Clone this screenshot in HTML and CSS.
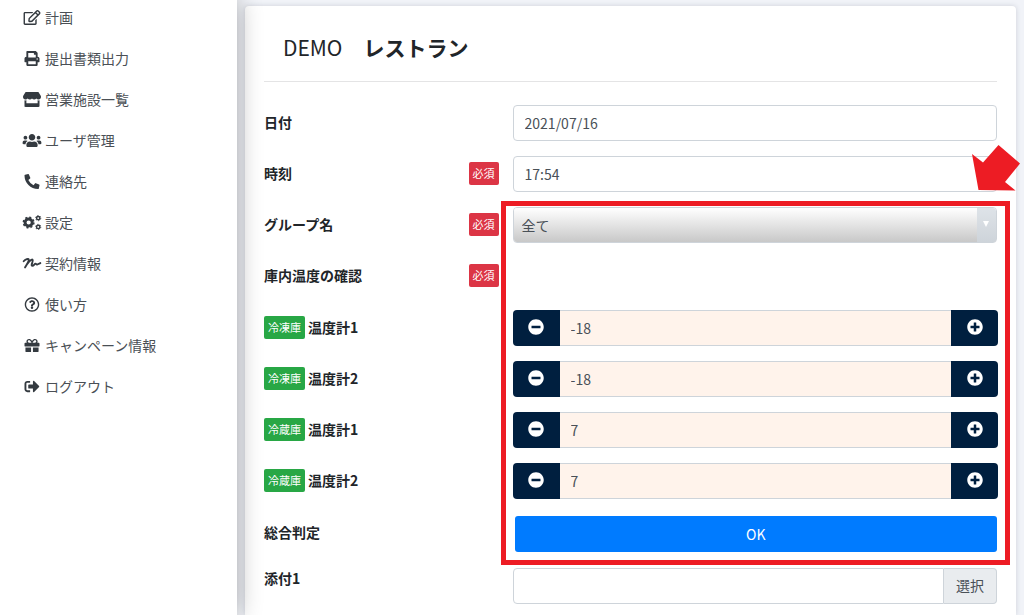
FILE: index.html
```html
<!DOCTYPE html>
<html lang="ja">
<head>
    <meta charset="UTF-8">
    <meta name="viewport" content="width=device-width, initial-scale=1.0">
    <title>DEMO レストラン</title>
    <link rel="stylesheet" href="styles.css">
</head>
<body>
    <svg class="defs" width="0" height="0" aria-hidden="true">
        <symbol id="minus" viewBox="0 0 512 512"><path d="M256 8C119 8 8 119 8 256s111 248 248 248 248-111 248-248S393 8 256 8zM124 296c-6.600 0-12-5.400-12-12v-56c0-6.600 5.400-12 12-12h264c6.600 0 12 5.400 12 12v56c0 6.600-5.400 12-12 12H124z"/></symbol>
        <symbol id="plus" viewBox="0 0 512 512"><path d="M256 8C119 8 8 119 8 256s111 248 248 248 248-111 248-248S393 8 256 8zm144 276c0 6.600-5.400 12-12 12h-92v92c0 6.600-5.400 12-12 12h-56c-6.600 0-12-5.400-12-12v-92h-92c-6.600 0-12-5.400-12-12v-56c0-6.600 5.400-12 12-12h92v-92c0-6.600 5.400-12 12-12h56c6.600 0 12 5.400 12 12v92h92c6.600 0 12 5.400 12 12v56z"/></symbol>
    </svg>
    <div class="layout">
        <nav class="sidebar">
            <a href="#"><svg viewBox="0 0 576 512"><path d="M402.300 344.900l32-32c5-5 13.700-1.500 13.700 5.700V464c0 26.500-21.500 48-48 48H48c-26.500 0-48-21.500-48-48V112c0-26.500 21.500-48 48-48h273.500c7.100 0 10.700 8.600 5.700 13.700l-32 32c-1.500 1.500-3.500 2.300-5.700 2.300H48v352h352V350.500c0-2.100.8-4.100 2.300-5.600zm156.600-201.800L296.300 405.700l-90.400 10c-26.200 2.900-48.500-19.200-45.600-45.600l10-90.400L432.900 17.100c22.900-22.900 59.900-22.900 82.700 0l43.200 43.200c22.900 22.900 22.900 60 .1 82.800zM460.100 174L402 115.900 216.200 301.800l-7.300 65.300 65.300-7.300L460.100 174zm64.800-79.700l-43.200-43.200c-4.100-4.100-10.800-4.100-14.800 0L436 82l58.100 58.100 30.900-30.900c4-4.200 4-10.800-.1-14.900z"/></svg>計画</a>
            <a href="#"><svg viewBox="0 0 512 512"><path d="M448 192V77.250c0-8.490-3.370-16.620-9.370-22.630L393.370 9.370c-6-6-14.140-9.370-22.630-9.370H96C78.330 0 64 14.330 64 32v160c-35.350 0-64 28.650-64 64v112c0 8.840 7.160 16 16 16h48v96c0 17.670 14.330 32 32 32h320c17.670 0 32-14.330 32-32v-96h48c8.840 0 16-7.160 16-16V256c0-35.350-28.650-64-64-64zm-64 256H128v-96h256v96zm0-224H128V64h192v48c0 8.840 7.160 16 16 16h48v96zm48 72c-13.250 0-24-10.750-24-24 0-13.260 10.750-24 24-24s24 10.740 24 24c0 13.250-10.750 24-24 24z"/></svg>提出書類出力</a>
            <a href="#"><svg viewBox="0 0 616 512"><path d="M602 118.600L537.100 15C531.300 5.700 521 0 510 0H106C95 0 84.700 5.700 78.900 15L14 118.600c-33.500 53.500-3.800 127.900 58.800 136.400 4.500.6 9.100.9 13.700.9 29.600 0 55.800-13 73.800-33.100 18 20.100 44.300 33.100 73.800 33.100 29.600 0 55.800-13 73.800-33.100 18 20.100 44.300 33.100 73.800 33.100 29.600 0 55.800-13 73.800-33.100 18.100 20.100 44.300 33.100 73.800 33.100 4.700 0 9.200-.3 13.700-.9 62.800-8.400 92.600-82.800 59-136.400zM529.500 288c-10 0-19.900-1.500-29.500-3.800V384H116v-99.800c-9.600 2.200-19.500 3.800-29.500 3.800-6 0-12.100-.4-18-1.200-5.600-.8-11.100-2.100-16.400-3.600V480c0 17.700 14.300 32 32 32h448c17.700 0 32-14.300 32-32V283.200c-5.400 1.600-10.800 2.900-16.400 3.600-6.100.8-12.100 1.200-18.200 1.200z"/></svg>営業施設一覧</a>
            <a href="#"><svg viewBox="0 0 640 512"><path d="M96 224c35.300 0 64-28.700 64-64s-28.700-64-64-64-64 28.700-64 64 28.700 64 64 64zm448 0c35.300 0 64-28.700 64-64s-28.700-64-64-64-64 28.700-64 64 28.700 64 64 64zm32 32h-64c-17.600 0-33.500 7.100-45.100 18.600 40.300 22.100 68.900 62 75.100 109.400h66c17.700 0 32-14.300 32-32v-32c0-35.300-28.700-64-64-64zm-256 0c61.900 0 112-50.100 112-112S381.900 32 320 32 208 82.100 208 144s50.100 112 112 112zm76.800 32h-8.300c-20.800 10-43.900 16-68.500 16s-47.600-6-68.500-16h-8.300C179.600 288 128 339.600 128 403.200V432c0 26.500 21.500 48 48 48h288c26.500 0 48-21.500 48-48v-28.800c0-63.600-51.600-115.200-115.200-115.200zm-223.700-13.400C161.500 263.100 145.600 256 128 256H64c-35.300 0-64 28.700-64 64v32c0 17.700 14.300 32 32 32h65.900c6.300-47.400 34.900-87.300 75.200-109.400z"/></svg>ユーザ管理</a>
            <a href="#"><svg viewBox="0 0 512 512"><path d="M497.390 361.800l-112-48a24 24 0 0 0-28 6.900l-49.600 60.600A370.660 370.660 0 0 1 130.600 204.110l60.600-49.600a23.940 23.940 0 0 0 6.900-28l-48-112A24.160 24.160 0 0 0 122.600.61l-104 24A24 24 0 0 0 0 48c0 256.500 207.900 464 464 464a24 24 0 0 0 23.400-18.600l24-104a24.290 24.290 0 0 0-14.010-27.600z"/></svg>連絡先</a>
            <a href="#"><svg viewBox="0 0 640 512" class="line"><circle cx="205" cy="256" r="122" stroke-width="100"/><circle cx="205" cy="256" r="180" stroke-width="50" pathLength="16" stroke-dasharray="1 1"/><circle cx="532" cy="106" r="58" stroke-width="50"/><circle cx="532" cy="106" r="88" stroke-width="30" pathLength="12" stroke-dasharray="1 1"/><circle cx="532" cy="406" r="58" stroke-width="50"/><circle cx="532" cy="406" r="88" stroke-width="30" pathLength="12" stroke-dasharray="1 1"/></svg>設定</a>
            <a href="#"><svg viewBox="0 0 640 512" class="line"><path stroke-width="64" stroke-linecap="round" stroke-linejoin="round" d="M35 180C90 110 205 75 210 125C212 190 120 320 82 390C160 260 290 90 340 125C380 165 260 330 330 335C390 335 400 260 440 260C475 260 455 300 500 290L605 240"/></svg>契約情報</a>
            <a href="#"><svg viewBox="0 0 512 512"><path d="M256 8C119.043 8 8 119.083 8 256c0 136.997 111.043 248 248 248s248-111.003 248-248C504 119.083 392.957 8 256 8zm0 448c-110.532 0-200-89.431-200-200 0-110.495 89.472-200 200-200 110.491 0 200 89.471 200 200 0 110.530-89.431 200-200 200zm107.244-255.200c0 67.052-72.421 68.084-72.421 92.863V300c0 6.627-5.373 12-12 12h-45.647c-6.627 0-12-5.373-12-12v-8.659c0-35.745 27.100-50.034 47.579-61.516 17.561-9.845 28.324-16.541 28.324-29.579 0-17.246-21.999-28.693-39.784-28.693-23.189 0-33.894 10.977-48.942 29.969-4.057 5.120-11.460 6.071-16.666 2.124l-27.824-21.098c-5.107-3.872-6.251-11.066-2.644-16.363C184.846 131.491 214.940 112 261.794 112c49.071 0 101.450 38.304 101.450 88.800zM298 368c0 23.159-18.841 42-42 42s-42-18.841-42-42 18.841-42 42-42 42 18.841 42 42z"/></svg>使い方</a>
            <a href="#"><svg viewBox="0 0 512 512"><path d="M32 448c0 17.700 14.300 32 32 32h160V320H32v128zm256 32h160c17.700 0 32-14.300 32-32V320H288v160zm192-320h-42.100c6.200-12.100 10.100-25.500 10.100-40 0-48.500-39.500-88-88-88-41.600 0-68.500 21.300-103 68.300-34.500-47-61.400-68.300-103-68.300-48.500 0-88 39.500-88 88 0 14.500 3.800 27.900 10.100 40H32c-17.700 0-32 14.300-32 32v80c0 8.800 7.200 16 16 16h480c8.800 0 16-7.200 16-16v-80c0-17.700-14.300-32-32-32zm-326.100 0c-22.100 0-40-17.900-40-40s17.900-40 40-40c19.900 0 34.600 3.300 86.100 80h-86.100zm206.100 0h-86.100c51.400-76.500 65.700-80 86.100-80 22.100 0 40 17.900 40 40s-17.900 40-40 40z"/></svg>キャンペーン情報</a>
            <a href="#"><svg viewBox="0 0 512 512"><path d="M497 273L329 441c-15 15-41 4.500-41-17v-96H152c-13.300 0-24-10.700-24-24v-96c0-13.300 10.700-24 24-24h136V88c0-21.400 25.900-32 41-17l168 168c9.300 9.400 9.300 24.600 0 34zM192 436v-40c0-6.600-5.400-12-12-12H96c-17.700 0-32-14.300-32-32V160c0-17.700 14.300-32 32-32h84c6.600 0 12-5.400 12-12V76c0-6.600-5.400-12-12-12H96c-53 0-96 43-96 96v192c0 53 43 96 96 96h84c6.600 0 12-5.400 12-12z"/></svg>ログアウト</a>
        </nav>
        <main class="content">
            <form class="card">
                <h1>DEMO　<strong>レストラン</strong></h1>
                <div class="row">
                    <label for="date">日付</label>
                    <input type="text" class="field" id="date" value="2021/07/16">
                </div>
                <div class="row">
                    <label for="time">時刻 <span class="badge required">必須</span></label>
                    <input type="text" class="field" id="time" value="17:54">
                </div>
                <div class="marked">
                    <div class="row">
                        <label for="group">グループ名 <span class="badge required">必須</span></label>
                        <div class="select">
                            <select id="group"><option>全て</option></select>
                        </div>
                    </div>
                    <div class="row heading">
                        <div class="label">庫内温度の確認 <span class="badge required">必須</span></div>
                    </div>
                    <div class="row">
                        <label for="temp1"><span class="badge type">冷凍庫</span>温度計1</label>
                        <div class="stepper">
                            <button type="button" aria-label="下げる"><svg><use href="#minus"/></svg></button>
                            <input type="text" id="temp1" value="-18">
                            <button type="button" aria-label="上げる"><svg><use href="#plus"/></svg></button>
                        </div>
                    </div>
                    <div class="row">
                        <label for="temp2"><span class="badge type">冷凍庫</span>温度計2</label>
                        <div class="stepper">
                            <button type="button" aria-label="下げる"><svg><use href="#minus"/></svg></button>
                            <input type="text" id="temp2" value="-18">
                            <button type="button" aria-label="上げる"><svg><use href="#plus"/></svg></button>
                        </div>
                    </div>
                    <div class="row">
                        <label for="temp3"><span class="badge type">冷蔵庫</span>温度計1</label>
                        <div class="stepper">
                            <button type="button" aria-label="下げる"><svg><use href="#minus"/></svg></button>
                            <input type="text" id="temp3" value="7">
                            <button type="button" aria-label="上げる"><svg><use href="#plus"/></svg></button>
                        </div>
                    </div>
                    <div class="row">
                        <label for="temp4"><span class="badge type">冷蔵庫</span>温度計2</label>
                        <div class="stepper">
                            <button type="button" aria-label="下げる"><svg><use href="#minus"/></svg></button>
                            <input type="text" id="temp4" value="7">
                            <button type="button" aria-label="上げる"><svg><use href="#plus"/></svg></button>
                        </div>
                    </div>
                    <div class="row">
                        <label for="result">総合判定</label>
                        <button type="button" class="ok" id="result">OK</button>
                    </div>
                    <div class="frame"></div>
                    <svg class="arrow" viewBox="0 0 48 46"><path d="M26.500 0L48 18.500 33 37l10.500 8.500L6.500 45 0 9l11 8.500z"/></svg>
                </div>
                <div class="row attach">
                    <label for="file1">添付1</label>
                    <div class="file">
                        <input type="text" id="file1">
                        <button type="button">選択</button>
                    </div>
                </div>
            </form>
        </main>
    </div>
</body>
</html>
```
FILE: styles.css
```css
* {
    box-sizing: border-box;
}
body {
    margin: 0;
    background-color: #f1f3f8;
    color: #212529;
    font-family: "Noto Sans CJK JP", sans-serif;
    font-size: 14px;
    line-height: 21px;
}
input, select, button {
    margin: 0;
    color: #495057;
    font-family: inherit;
    font-size: 14px;
}
.defs {
    display: block;
}
.layout {
    display: flex;
    min-height: 100vh;
}

/* sidebar */
.sidebar {
    position: relative;
    z-index: 1;
    flex: 0 0 237px;
    padding-left: 22px;
    background-color: #fff;
    box-shadow: 0 0 24px rgba(0, 0, 0, 0.33);
    clip-path: inset(0 -40px 0 0);
}
.sidebar a {
    display: flex;
    align-items: center;
    gap: 3px;
    height: 34px;
    margin-bottom: 7px;
    color: #4a4f55;
    text-decoration: none;
}
.sidebar svg {
    width: 20px;
    height: 15px;
    fill: #343a40;
}
.sidebar .line {
    fill: none;
    stroke: #343a40;
}

/* form */
.content {
    display: flex;
    flex: 1;
    min-width: 0;
    padding: 6px 8px 0;
}
.card {
    flex: 1;
    min-width: 0;
    padding: 21px 19px 0;
    background-color: #fff;
    border-radius: 4px 4px 0 0;
    box-shadow: 0 0 5px rgba(60, 70, 90, 0.2);
}
h1 {
    margin: 0 0 23px;
    padding: 0 19px 13px;
    border-bottom: 1px solid #e4e4e5;
    font-size: 21px;
    font-weight: normal;
    line-height: 41px;
}
.row {
    display: grid;
    grid-template-columns: 32% 1fr;
    column-gap: 14px;
    align-items: center;
    min-height: 36px;
    margin-bottom: 15px;
}
.row label, .label {
    display: flex;
    align-items: center;
    padding-bottom: 2px;
    font-weight: bold;
}
.heading {
    min-height: 37px;
}
.badge {
    padding: 0 4px;
    border-radius: 2px;
    color: #fff;
    font-size: 11px;
    font-weight: normal;
    line-height: 23px;
}
.required {
    margin-left: auto;
    background-color: #dc3545;
}
.type {
    margin-right: 3px;
    background-color: #28a745;
}
.field {
    width: 100%;
    height: 36px;
    padding: 0 11px;
    border: 1px solid #ced4da;
    border-radius: 4px;
}
.select {
    position: relative;
    overflow: hidden;
    height: 36px;
    border: 1px solid #ced4da;
    border-radius: 4px;
}
.select select {
    appearance: none;
    width: 100%;
    height: 34px;
    padding: 0 8px;
    border: none;
    background: linear-gradient(#fff, #c8c8c8);
}
.select::before {
    content: "";
    position: absolute;
    top: 0;
    right: 0;
    bottom: 0;
    width: 19px;
    background: linear-gradient(#dee3e8, #ced4da);
    pointer-events: none;
}
.select::after {
    content: "";
    position: absolute;
    top: 13px;
    right: 7px;
    border: 3px solid transparent;
    border-top: 6px solid #fff;
    pointer-events: none;
}
.stepper, .file {
    display: flex;
    height: 36px;
}
.stepper {
    margin-right: -1px;
}
.stepper input, .file input {
    flex: 1;
    min-width: 0;
    padding: 0 11px;
    border: 1px solid #ced4da;
}
.stepper input {
    border-width: 1px 0;
    background-color: #fff3eb;
}
.stepper button {
    display: flex;
    align-items: center;
    justify-content: center;
    width: 47px;
    padding: 0 0 2px;
    border: none;
    border-radius: 4px 0 0 4px;
    background-color: #001f3f;
}
.stepper button:last-child {
    border-radius: 0 4px 4px 0;
}
.stepper svg {
    width: 16px;
    height: 16px;
    fill: #fff;
}
.ok {
    height: 36px;
    margin: 2px 0 1px 2px;
    border: none;
    border-radius: 3px;
    background-color: #007bff;
    color: #fff;
}
.attach {
    align-items: start;
    margin-bottom: 0;
}
.file input {
    border-radius: 4px 0 0 4px;
}
.file button {
    width: 53px;
    padding: 0 0 2px;
    border: 1px solid #ced4da;
    border-left: none;
    border-radius: 0 4px 4px 0;
    background-color: #e9ecef;
}

/* marker drawn over the form */
.marked {
    position: relative;
}
.frame {
    position: absolute;
    top: -6px;
    right: -13px;
    bottom: -12px;
    left: calc(32% + 2px);
    border: 5px solid #ed1c24;
    pointer-events: none;
}
.arrow {
    position: absolute;
    top: -62px;
    right: -23px;
    width: 48px;
    height: 46px;
    fill: #ed1c24;
}
```
